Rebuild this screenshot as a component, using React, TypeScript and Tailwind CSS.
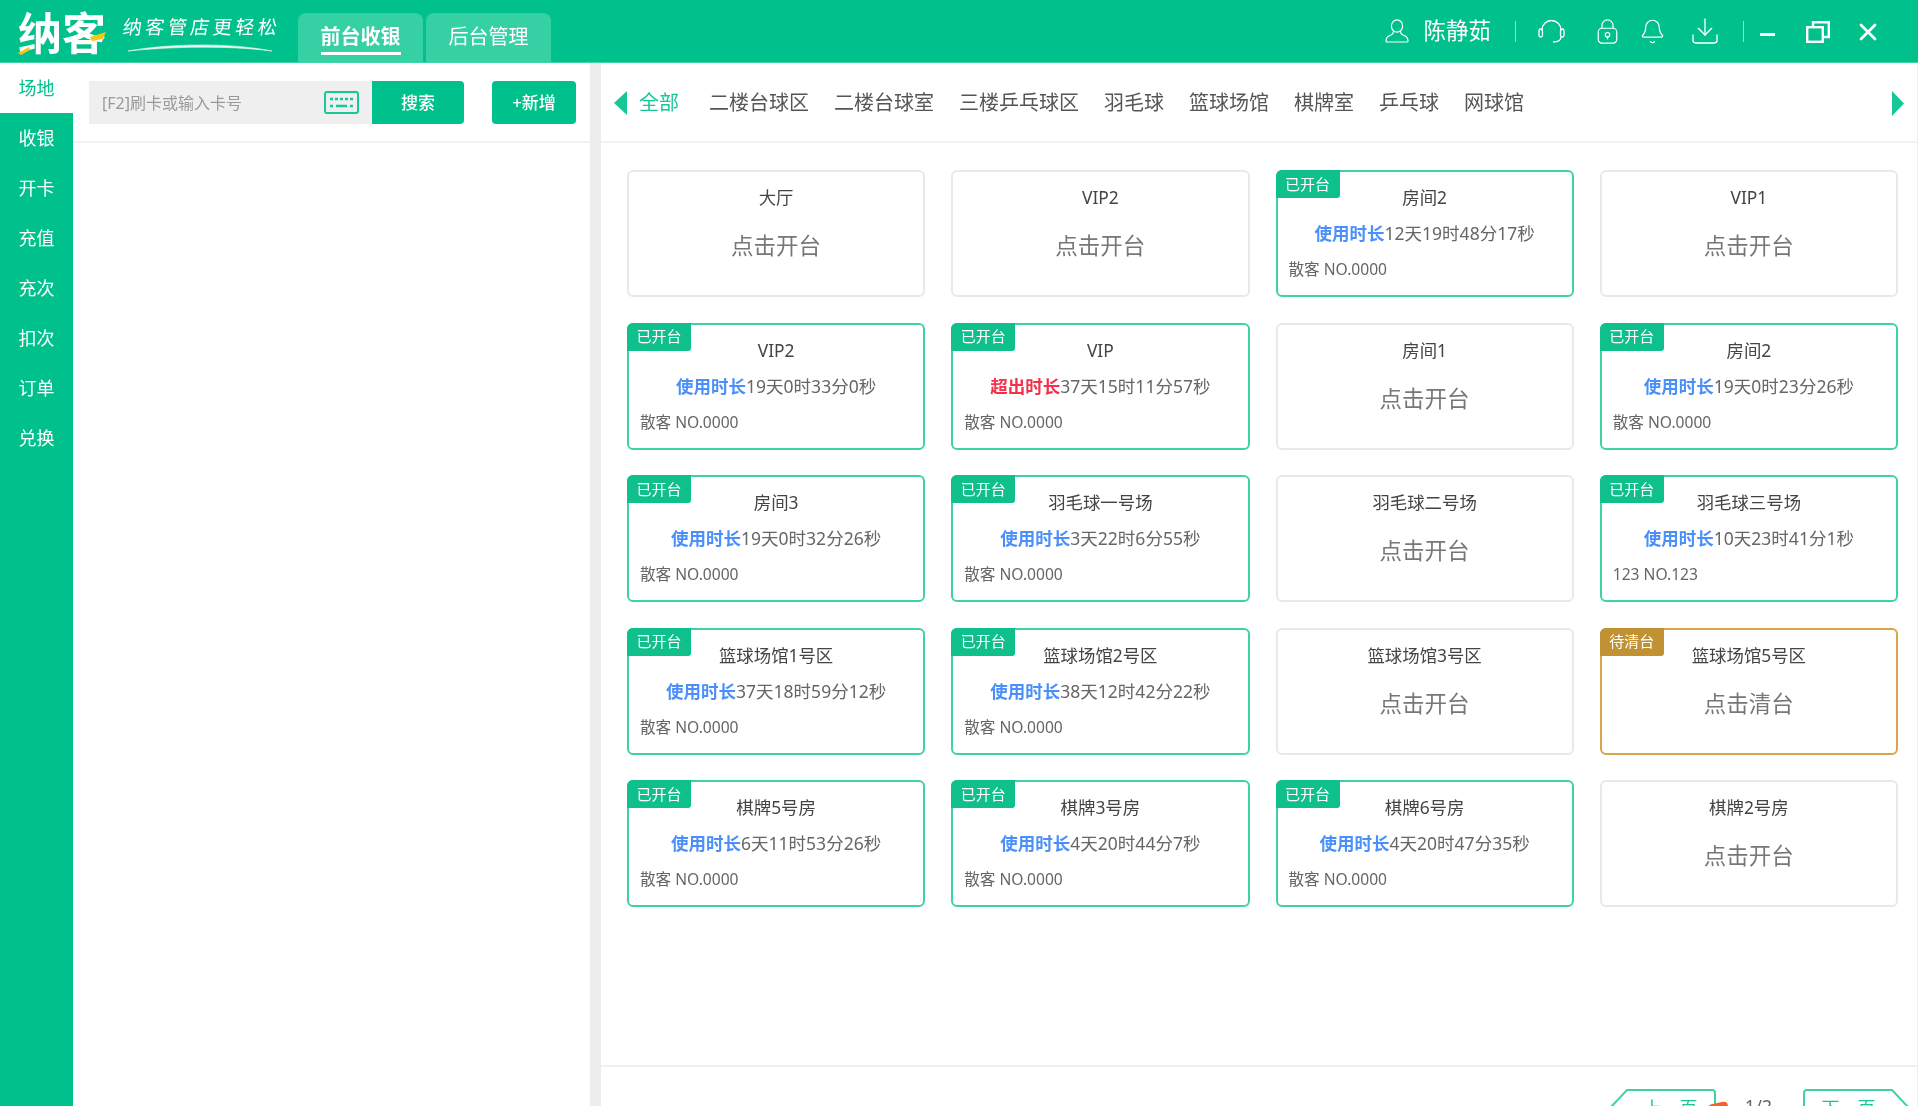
import { Bell, Download, X } from "lucide-react";

type Table =
  | { name: string; state: "idle" }
  | { name: string; state: "dirty" }
  | { name: string; state: "open"; label: "使用时长" | "超出时长"; time: string; guest: string };

const GUEST = "散客 NO.0000";

const TABLES: Table[] = [
  { name: "大厅", state: "idle" },
  { name: "VIP2", state: "idle" },
  { name: "房间2", state: "open", label: "使用时长", time: "12天19时48分17秒", guest: GUEST },
  { name: "VIP1", state: "idle" },
  { name: "VIP2", state: "open", label: "使用时长", time: "19天0时33分0秒", guest: GUEST },
  { name: "VIP", state: "open", label: "超出时长", time: "37天15时11分57秒", guest: GUEST },
  { name: "房间1", state: "idle" },
  { name: "房间2", state: "open", label: "使用时长", time: "19天0时23分26秒", guest: GUEST },
  { name: "房间3", state: "open", label: "使用时长", time: "19天0时32分26秒", guest: GUEST },
  { name: "羽毛球一号场", state: "open", label: "使用时长", time: "3天22时6分55秒", guest: GUEST },
  { name: "羽毛球二号场", state: "idle" },
  { name: "羽毛球三号场", state: "open", label: "使用时长", time: "10天23时41分1秒", guest: "123 NO.123" },
  { name: "篮球场馆1号区", state: "open", label: "使用时长", time: "37天18时59分12秒", guest: GUEST },
  { name: "篮球场馆2号区", state: "open", label: "使用时长", time: "38天12时42分22秒", guest: GUEST },
  { name: "篮球场馆3号区", state: "idle" },
  { name: "篮球场馆5号区", state: "dirty" },
  { name: "棋牌5号房", state: "open", label: "使用时长", time: "6天11时53分26秒", guest: GUEST },
  { name: "棋牌3号房", state: "open", label: "使用时长", time: "4天20时44分7秒", guest: GUEST },
  { name: "棋牌6号房", state: "open", label: "使用时长", time: "4天20时47分35秒", guest: GUEST },
  { name: "棋牌2号房", state: "idle" },
];

const NAV = ["场地", "收银", "开卡", "充值", "充次", "扣次", "订单", "兑换"];
const AREAS = ["二楼台球区", "二楼台球室", "三楼乒乓球区", "羽毛球", "篮球场馆", "棋牌室", "乒乓球", "网球馆"];

function Logo() {
  return (
    <div className="flex items-start">
      <div className="relative ml-[18px] mt-[11px] h-[44px] w-[92px] text-[44px] font-bold leading-[44px] text-white">
        纳客
        <svg className="absolute left-0 top-0" width="92" height="44" viewBox="0 0 92 44">
          <path d="M0 42 L11 36 L12 39 L3 44Z" fill="#f5c518" />
          <path d="M72 26 L88 21 L85 28 L74 30Z" fill="#f5c518" />
        </svg>
      </div>
      <div className="relative ml-[13px] mt-[14px] w-[160px]">
        <div className="skew-x-[-8deg] whitespace-nowrap text-[19px] leading-[26px] tracking-[3.5px] text-white">纳客管店更轻松</div>
        <svg className="absolute left-[3px] top-[28px]" width="148" height="12" viewBox="0 0 148 12">
          <path d="M2 9 C 40 2, 100 0, 146 9 C 100 3, 40 5, 2 9Z" fill="#e6f8f1" stroke="#e6f8f1" strokeWidth="0.6" />
        </svg>
      </div>
    </div>
  );
}

function UserIcon() {
  return (
    <svg width="24" height="24" viewBox="0 0 24 24" fill="none" stroke="currentColor" strokeWidth="1.2">
      <ellipse cx="12" cy="7" rx="5.6" ry="6.2" />
      <path d="M8.6 12 C8.6 14 8 15 6 16 C3 17 1 19 1 22 a1 1 0 0 0 1 1 H22 a1 1 0 0 0 1 -1 C23 19 21 17 18 16 C16 15 15.4 14 15.4 12" />
    </svg>
  );
}

function HeadsetIcon() {
  return (
    <svg className="ml-[22px]" width="27" height="24" viewBox="0 0 27 24" fill="none" stroke="currentColor" strokeWidth="1.3">
      <path d="M4 12 V11 a9.5 9.5 0 0 1 19 0 V12" />
      <rect x="1" y="10" width="3.5" height="8" rx="1.7" />
      <rect x="22.5" y="10" width="3.5" height="8" rx="1.7" />
      <path d="M23 18 C23 21 20 23 15 23" />
    </svg>
  );
}

function Header() {
  return (
    <header className="flex h-[63px] shrink-0 items-stretch border-b border-[#3fd6a6] bg-[#00c18c]">
      <Logo />
      <nav className="ml-[15px] flex items-end gap-[3px]">
        <div className="flex h-[49px] w-[125px] justify-center rounded-t-lg bg-[#36d0a5]">
          <span className="mt-[11px] h-[31px] border-b-[3px] border-white text-[20px] font-bold leading-[26px] text-white">
            前台收银
          </span>
        </div>
        <div className="flex h-[49px] w-[125px] justify-center rounded-t-lg bg-[#36d0a5] pt-[11px] text-[20px] leading-[26px] text-white">
          后台管理
        </div>
      </nav>
      <div className="ml-auto mr-[36px] flex items-center text-white">
        <UserIcon />
        <span className="ml-[14px] text-[22.5px] leading-none">陈静茹</span>
        <span className="ml-[24px] h-[21px] w-px bg-[#8fe4ca]" />
        <HeadsetIcon />
        <svg className="ml-[32px]" width="21" height="25" viewBox="0 0 22 27" fill="none" stroke="currentColor" strokeWidth="1.3">
          <rect x="1" y="10" width="20" height="16" rx="4" />
          <path d="M5 10 V7 a6 6 0 0 1 12 0 V10" />
          <circle cx="11" cy="17" r="2.4" />
          <path d="M11 19.5 V22" />
        </svg>
        <Bell className="ml-[21px] h-[27px] w-[27px]" strokeWidth={1.1} />
        <Download className="ml-[23px] h-[32px] w-[32px]" strokeWidth={1} />
        <span className="ml-[22px] h-[21px] w-px bg-[#8fe4ca]" />
        <span className="ml-[16px] mt-[7px] h-[3px] w-[15px] bg-white" />
        <svg className="ml-[31px] mt-[2px]" width="24" height="22" viewBox="0 0 24 22" fill="none" stroke="currentColor" strokeWidth="2.4">
          <rect x="1.2" y="6.2" width="15.6" height="14.6" />
          <path d="M7 6 V1.2 H22.8 V16 H17" />
        </svg>
        <X className="ml-[24px] mt-[2px] h-[28px] w-[28px]" strokeWidth={2.4} />
      </div>
    </header>
  );
}

function Sidebar() {
  return (
    <aside className="w-[73px] shrink-0 bg-[#00c18c]">
      {NAV.map((item, index) => (
        <div
          key={item}
          className={
            index === 0
              ? "flex h-[50px] items-center justify-center bg-white pt-[1px] text-[18px] text-[#00c18c]"
              : "flex h-[50px] items-center justify-center pt-[1px] text-[18px] text-white"
          }
        >
          {item}
        </div>
      ))}
    </aside>
  );
}

function KeyboardIcon() {
  return (
    <svg width="35" height="23" viewBox="0 0 35 23" fill="none">
      <rect x="1" y="1" width="33" height="21" rx="2" stroke="#19c796" strokeWidth="2" />
      <path d="M6 8 H29 M6 15 H9 M12 15 H23 M26 15 H29" stroke="#19c796" strokeWidth="2.4" />
      <path d="M10 6 V10 M15 6 V10 M20 6 V10 M25 6 V10" stroke="#efefef" strokeWidth="2" />
    </svg>
  );
}

function SearchPanel() {
  return (
    <section className="w-[517px] shrink-0">
      <div className="flex h-[80px] items-start border-b-2 border-[#f3f3f3] pl-[16px] pt-[18px]">
        <div className="flex h-[43px] w-[283px] items-center bg-[#efefef] pl-[13px] pr-[13px]">
          <span className="text-[16px] text-[#9a9a9a]">[F2]刷卡或输入卡号</span>
          <span className="ml-auto flex">
            <KeyboardIcon />
          </span>
        </div>
        <button type="button" className="h-[43px] w-[92px] rounded-r-sm bg-[#00c18c] text-[17px] font-medium text-white">
          搜索
        </button>
        <button type="button" className="ml-[28px] h-[43px] w-[84px] rounded-sm bg-[#00c18c] text-[17px] font-medium text-white">
          +新增
        </button>
      </div>
    </section>
  );
}

function AreaTabs() {
  return (
    <div className="flex h-[80px] shrink-0 items-center border-b-2 border-[#f3f3f3] pl-[13px] pr-[13px] pt-[2px]">
      <svg width="13" height="24" viewBox="0 0 13 24">
        <path d="M13 0 V24 L0 12Z" fill="#19c796" />
      </svg>
      <span className="ml-[12px] text-[20px] text-[#19c796]">全部</span>
      <div className="ml-[30px] flex gap-[25px] text-[20px] text-[#555555]">
        {AREAS.map((area) => (
          <span key={area}>{area}</span>
        ))}
      </div>
      <svg className="ml-auto" width="12" height="25" viewBox="0 0 12 25">
        <path d="M0 0 V25 L12 12.5Z" fill="#19c796" />
      </svg>
    </div>
  );
}

function TableCard({ table }: { table: Table }) {
  const border =
    table.state === "idle"
      ? "border-[#e9e9e9]"
      : table.state === "dirty"
        ? "border-[#d9a548]"
        : "border-[#40d2a6]";

  return (
    <div className={`relative flex h-[127px] flex-col items-center rounded-md border-2 bg-white ${border}`}>
      {table.state === "open" && (
        <span className="absolute -left-[2px] -top-[2px] flex h-[28px] w-[64px] items-center justify-center rounded-tl-md rounded-br-[3px] bg-[#0fbf8c] text-[15px] text-white">
          已开台
        </span>
      )}
      {table.state === "dirty" && (
        <span className="absolute -left-[2px] -top-[2px] flex h-[28px] w-[64px] items-center justify-center rounded-tl-md rounded-br-[3px] bg-[#c09233] text-[15px] text-white">
          待清台
        </span>
      )}
      <div className="mt-[12px] h-[26px] text-[17.4px] leading-[26px] text-[#444444]">{table.name}</div>
      {table.state === "open" ? (
        <>
          <div className="mt-[11px] h-[24px] text-[17.5px] leading-[24px] text-[#666666]">
            <span className={table.label === "超出时长" ? "font-bold text-[#f5304a]" : "font-bold text-[#4b8ffa]"}>
              {table.label}
            </span>
            {table.time}
          </div>
          <div className="mt-[13px] h-[22px] w-full pl-[11px] text-[15.6px] leading-[22px] text-[#666666]">{table.guest}</div>
        </>
      ) : (
        <div className="mt-[21px] text-[22.5px] leading-[30px] text-[#777777]">
          {table.state === "dirty" ? "点击清台" : "点击开台"}
        </div>
      )}
    </div>
  );
}

function PagerButton({ side, label }: { side: "left" | "right"; label: string }) {
  return (
    <div className={side === "left" ? "relative h-[40px] w-[107px] shrink-0 pl-[16px]" : "relative h-[40px] w-[107px] shrink-0 pr-[16px]"}>
      <svg className="absolute inset-0" width="107" height="40" viewBox="0 0 107 40" fill="none">
        <path
          d={
            side === "left"
              ? "M1 19 L18 1 H103 a3 3 0 0 1 3 3 V39"
              : "M106 19 L89 1 H4 a3 3 0 0 0 -3 3 V39"
          }
          stroke="#40d2a6"
          strokeWidth="2"
        />
      </svg>
      <div className="relative pt-[6px] text-center text-[18px] leading-[26px] text-[#19c796]">{label}</div>
    </div>
  );
}

function Pager() {
  return (
    <div className="flex h-[41px] shrink-0 items-start border-t-2 border-[#f0f0f0] pt-[22px]">
      <div className="ml-[1008px] flex">
        <PagerButton side="left" label="上一页" />
        <div className="relative w-[87px] text-center text-[18px] leading-[26px] text-[#666666]">
          <span className="absolute -left-[8px] top-[14px] h-[8px] w-[20px] -rotate-12 rounded-sm bg-[#f4622d]" />
          <span className="relative left-[-1px] top-[4px]">1/2</span>
        </div>
        <PagerButton side="right" label="下一页" />
      </div>
    </div>
  );
}

export default function App() {
  return (
    <div
      className="flex h-[1106px] w-full flex-col overflow-hidden bg-white blur-[0.4px]"
      style={{ fontFamily: '"Noto Sans", "Noto Sans CJK SC", sans-serif' }}
    >
      <Header />
      <div className="flex min-h-0 flex-1">
        <Sidebar />
        <SearchPanel />
        <div className="w-[11px] shrink-0 bg-[#ededed]" />
        <main className="flex min-w-0 flex-1 flex-col border-r border-[#eeeeee]">
          <AreaTabs />
          <div className="flex-1 pl-[26px] pr-[19px] pt-[27px]">
            <div className="grid grid-cols-4 gap-x-[26px] gap-y-[25.5px]">
              {TABLES.map((table, index) => (
                <TableCard key={index} table={table} />
              ))}
            </div>
          </div>
          <Pager />
        </main>
      </div>
    </div>
  );
}
